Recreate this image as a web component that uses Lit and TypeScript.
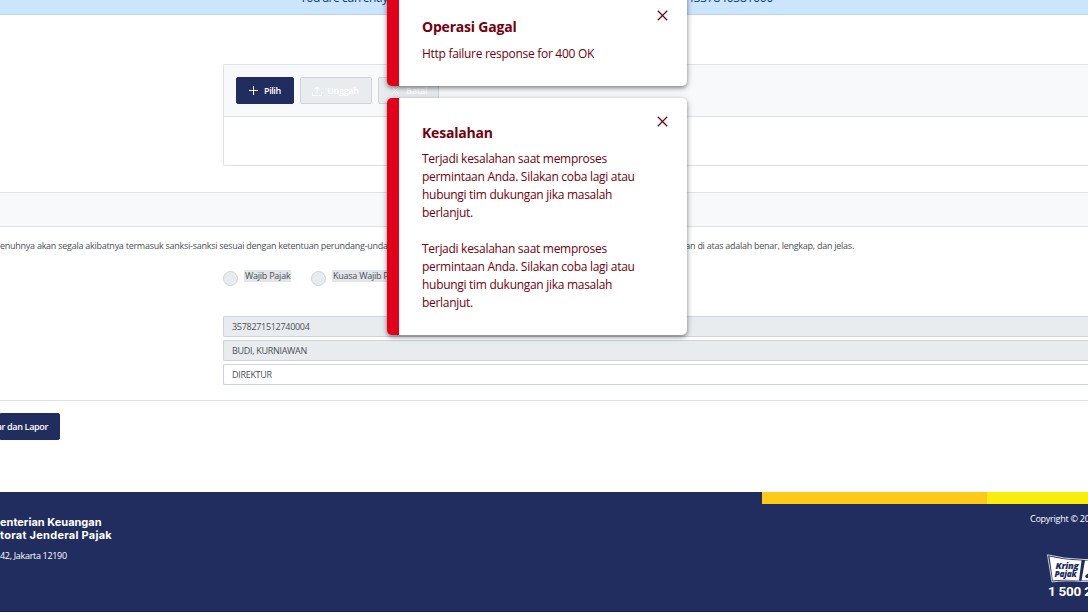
import { LitElement, html, css } from "lit";
import { customElement, property } from "lit/decorators.js";

const closeIcon = html`<svg viewBox="0 0 14 14" width="11" height="11" fill="none" stroke="currentColor" stroke-width="1.5"><path d="M1 1L13 13M13 1L1 13" /></svg>`;

@customElement("toast-message")
class ToastMessage extends LitElement {
  @property() heading = "";
  @property({ attribute: false }) lines: string[] = [];
  static styles = css`
    :host { display: block; box-sizing: border-box; width: 300px; position: relative; background: #fff;
      border-left: 12px solid #e50019; border-radius: 5px; padding: 25px 23px; color: #73000c;
      box-shadow: 0 2px 4px rgba(0,0,0,.42), 0 1px 10px rgba(0,0,0,.12);
      font: 12px/18px "Open Sans", sans-serif; }
    .head { font-weight: 700; font-size: 14px; line-height: 20px; letter-spacing: -.2px; height: var(--head-height, 27px); }
    .line { white-space: pre; letter-spacing: -.29px; height: 18px; }
    .close { position: absolute; top: 18px; right: 19px; display: block; line-height: 0; }
  `;
  render() {
    return html`<div class="head">${this.heading}</div>
      ${this.lines.map((l) => html`<div class="line">${l}</div>`)}
      <span class="close">${closeIcon}</span>`;
  }
}

@customElement("hotline-badge")
class HotlineBadge extends LitElement {
  static styles = css`
    :host { display: block; width: 100px; font-family: "Open Sans", sans-serif; color: #fff; }
    svg { display: block; }
    .tag { font: italic 800 9.5px "Open Sans", sans-serif; fill: #212d5e; }
    .num { font: 700 13.5px Roboto, sans-serif; fill: #fff; }
  `;
  render() {
    return html`<svg width="100" height="46" viewBox="0 0 100 46">
      <path d="M.5 .8Q17 5 37 5.5H90V27.500H36Q18 26 5 28Z" fill="none" stroke="#c9cede" stroke-width="1" />
      <path d="M2.500 2.500Q17 6 34.500 6.500L32 26.500Q18 25 5.800 26.500Z" fill="#fff" />
      <path d="M38 6.500H90V26.500H34.500Z" fill="#fff" />
      <path d="M38 22Q40 19 46 18V24H39Z" fill="#212d5e" />
      <text class="tag" x="8.500" y="15" textLength="23" lengthAdjust="spacingAndGlyphs">Kring</text>
      <text class="tag" x="7.500" y="22.500" textLength="22" lengthAdjust="spacingAndGlyphs">Pajak</text>
      <text class="num" x="1" y="42">1 500 200</text>
    </svg>`;
  }
}

@customElement("app-root")
class AppRoot extends LitElement {
  static styles = css`
    :host { display: block; position: relative; width: 1088px; height: 612px; overflow: hidden; background: #fff;
      font: 9px/14px "Open Sans", sans-serif; color: #495057; white-space: nowrap; }
    * { box-sizing: border-box; }
    .banner { height: 15px; background: #cce5ff; border-bottom: 1px solid #b8d4f0; color: #0b3a70;
      display: flex; padding: 0 315px 0 300px; justify-content: space-between; overflow: hidden;
      font-size: 12px; line-height: 16px; letter-spacing: -.5px; }
    .banner span { margin-top: -10px; }
    .banner .id { letter-spacing: -.25px; }
    .upload { margin: 49px 0 0 223px; height: 102px; border: 1px solid #dee2e6; border-right: 0; border-radius: 2px 0 0 2px; }
    .bar { height: 52px; background: #f8f9fa; border-bottom: 1px solid #dee2e6; padding: 12px; display: flex; gap: 6px; }
    .btn { height: 27px; border-radius: 2px; background: #212d5e; border: 1px solid #212d5e; color: #fff;
      display: flex; align-items: center; font-weight: 600; letter-spacing: -.25px; }
    .btn svg { flex: none; }
    .pick { width: 58px; padding-left: 12px; gap: 6px; letter-spacing: -.4px; }
    .send { width: 72px; padding-left: 11px; gap: 5px; }
    .cancel { width: 61px; padding-left: 12px; gap: 6px; }
    .off { background: #e9ecef; border-color: #ced4da; }
    .section { margin-top: 26px; height: 35px; background: #f8f9fa; border: 1px solid #dee2e6; border-width: 1px 0; }
    .oath { margin-top: 12px; height: 14px; display: flex; justify-content: space-between; width: 854px; letter-spacing: -.26px; }
    .radios { margin: 17px 0 0 223px; height: 17px; display: flex; align-items: flex-start; }
    .dot { width: 15px; height: 15px; border: 1px solid #ced4da; border-radius: 50%; background: #e9ecef; margin-top: 1px; }
    .lab { margin: 0 20px 0 6px; height: 12px; line-height: 11px; background: #e2e5e9; padding: 0 1px; width: 47px; letter-spacing: -.25px; }
    .lab.wide { width: 76px; }
    .fields { margin: 29px 0 0 223px; display: grid; gap: 3px; }
    .field { height: 21px; border: 1px solid #ced4da; border-right: 0; border-radius: 2px 0 0 2px; padding-left: 8px; line-height: 19px; letter-spacing: -.3px; }
    .actions { margin-top: 15px; border-top: 1px solid #dee2e6; padding-top: 12px; height: 92px; }
    .pay { width: 60px; padding-right: 11px; justify-content: flex-end; border-radius: 0 2px 2px 0; letter-spacing: -.34px; }
    .footer { height: 120px; background: #212d5e; color: #fff; border-bottom: 1px solid #18224b; }
    .stripe { display: flex; height: 12px; padding-left: 762px; }
    .gold { width: 225px; background: #ffc917; }
    .yellow { flex: 1; background: #f9ed0e; }
    .cols { display: flex; justify-content: space-between; height: 107px; }
    .org { padding-top: 12px; }
    .name { font: 700 11px/12px Inter, sans-serif; display: block; }
    .name.unit { letter-spacing: .26px; padding-top: 1px; }
    .addr { display: block; margin-top: 8px; letter-spacing: -.31px; }
    .right { width: 58px; overflow: hidden; padding-top: 8px; letter-spacing: -.25px; }
    hotline-badge { margin: 28px 0 0 17px; }
    .toasts { position: absolute; left: 387px; top: -8px; display: grid; gap: 12px; }
    .t1 { height: 94px; --head-height: 28px; }
    .t2 { height: 237px; }
  `;
  render() {
    const para = ["Terjadi kesalahan saat memproses", "permintaan Anda. Silakan coba lagi atau", "hubungi tim dukungan jika masalah", "berlanjut."];
    return html`
      <div class="banner"><span>You are currently</span><span class="id">4337840381000</span></div>
      <div class="upload"><div class="bar">
        <div class="btn pick"><svg width="9" height="9" viewBox="0 0 9 9" stroke="#fff" fill="none"><path d="M4.500 0V9M0 4.500H9" /></svg>Pilih</div>
        <div class="btn send off"><svg width="10" height="10" viewBox="0 0 10 10" stroke="#fff" fill="none"><path d="M5 7V1M2.500 3.200L5 .8L7.500 3.200M.5 6V9.500H9.500V6" /></svg>Unggah</div>
        <div class="btn cancel off"><svg width="9" height="9" viewBox="0 0 9 9" stroke="#fff" fill="none"><path d="M.7 .7L8.300 8.300M8.300 .7L.7 8.300" /></svg>Batal</div>
      </div></div>
      <div class="section"></div>
      <div class="oath"><span>enuhnya akan segala akibatnya termasuk sanksi-sanksi sesuai dengan ketentuan perundang-unda</span><span>an di atas adalah benar, lengkap, dan jelas.</span></div>
      <div class="radios"><span class="dot"></span><span class="lab">Wajib Pajak</span><span class="dot"></span><span class="lab wide">Kuasa Wajib Pajak</span></div>
      <div class="fields"><div class="field off">3578271512740004</div><div class="field off">BUDI, KURNIAWAN</div><div class="field">DIREKTUR</div></div>
      <div class="actions"><div class="btn pay">ar dan Lapor</div></div>
      <div class="footer"><div class="stripe"><span class="gold"></span><span class="yellow"></span></div>
        <div class="cols"><div class="org"><span class="name">enterian Keuangan</span><span class="name unit">torat Jenderal Pajak</span><span class="addr">42, Jakarta 12190</span></div>
        <div class="right">Copyright © 2025<hotline-badge></hotline-badge></div></div></div>
      <div class="toasts">
        <toast-message class="t1" heading="Operasi Gagal" .lines=${["Http failure response for 400 OK"]}></toast-message>
        <toast-message class="t2" heading="Kesalahan" .lines=${[...para, "", ...para]}></toast-message>
      </div>`;
  }
}
